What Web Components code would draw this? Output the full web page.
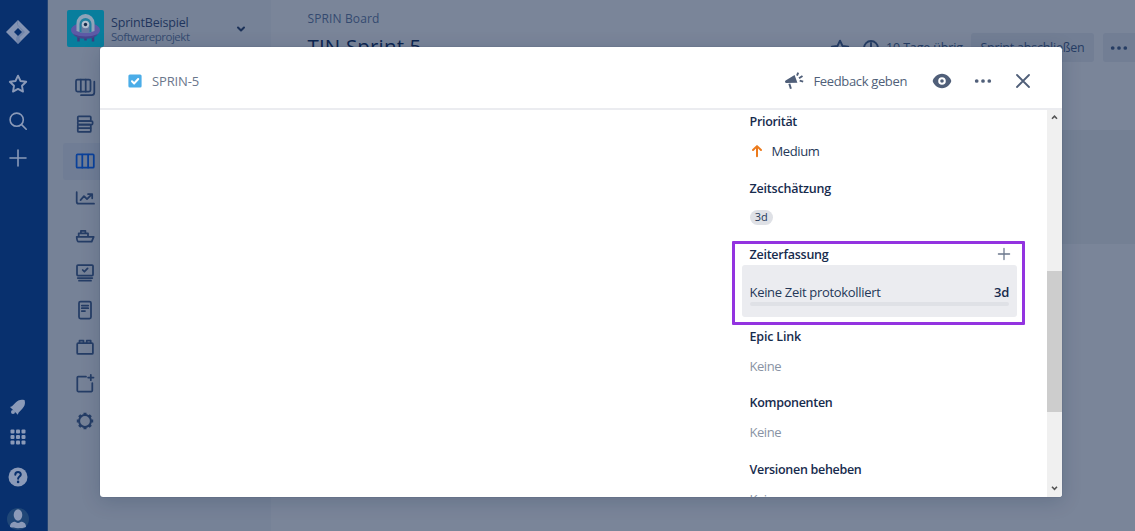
<!DOCTYPE html>
<html lang="de"><head><meta charset="utf-8"><title>SPRIN-5</title>
<style>
html,body{margin:0;height:100%;overflow:hidden}
body{font-family:"Open Sans","Noto Sans",sans-serif;font-size:13px;line-height:20px;color:#253858}
</style></head><body>
<jira-app></jira-app>
<script>
const define=(name,html,setup)=>customElements.define(name,class extends HTMLElement{
  connectedCallback(){
    if(this.shadowRoot)return;
    const t=document.createElement('template');t.innerHTML=html;
    this.attachShadow({mode:'open'}).append(t.content.cloneNode(true));
    if(setup)setup(this,this.shadowRoot);
  }
});

/* One line of text, tracked so that it fills the width given in "w". */
define('fit-text',`<style>:host{display:inline-block;white-space:nowrap}span{display:inline-block}</style><span><slot></slot></span>`,(el,root)=>{
  const s=root.querySelector('span'),w=+el.getAttribute('w'),n=el.textContent.length;
  s.style.letterSpacing=((w-s.getBoundingClientRect().width)/n)+'px';
  el.style.width=w+'px';
});

const icons={
logo:`<path fill="#8594b3" d="M12 0 24 12 12 24 0 12z"/><path fill="#6178a3" d="M12 0c-2 3-1 5 1 7l3 4-4 4c-3 3-2 6 0 9l3-3c-2-2-2-4 0-5l4-4-7-7z" opacity=".55"/><path fill="#08306e" d="m12 8 4 4-4 4-4-4z"/>`,
star:`<path stroke-width="1.900" d="m12 3.700 2.500 5.300 5.700.8-4.200 4 1 5.800L12 16.900l-5 2.700 1-5.800-4.200-4 5.700-.8z"/>`,
search:`<circle cx="10.700" cy="10.700" r="6.600"/><path d="m15.600 15.600 4.600 4.600"/>`,
plus:`<path d="M12 4v16M4 12h16"/>`,
bell:`<path class="f" d="M18.700 5.300c-4-1.300-7 .3-9 2.300L6 11.300l-2 .6 7.800 7.800.7-2 3.800-3.900c2-2 3.300-4.700 2.400-8.500z"/><circle class="f" cx="7" cy="17" r="2"/>`,
grid:`<g class="f"><rect x="4.500" y="4.500" width="4" height="4" rx="1"/><rect x="10" y="4.500" width="4" height="4" rx="1"/><rect x="15.500" y="4.500" width="4" height="4" rx="1"/><rect x="4.500" y="10" width="4" height="4" rx="1"/><rect x="10" y="10" width="4" height="4" rx="1"/><rect x="15.500" y="10" width="4" height="4" rx="1"/><rect x="4.500" y="15.500" width="4" height="4" rx="1"/><rect x="10" y="15.500" width="4" height="4" rx="1"/><rect x="15.500" y="15.500" width="4" height="4" rx="1"/></g>`,
help:`<circle class="f" cx="12" cy="12" r="9.500"/><path d="M9.300 9.700c0-3.600 5.500-3.500 5.500-.2 0 2-2.700 2.100-2.700 4.300" stroke="#08306e" stroke-width="2"/><circle cx="12.100" cy="16.900" r="1.300" fill="#08306e" stroke="none"/>`,
user:`<circle cx="12" cy="12" r="11" fill="#204777" stroke="none"/><ellipse class="f" cx="12" cy="8" rx="4.300" ry="5.700"/><path class="f" d="M4 20c0-4 2.500-5 5-5.200 1.500 1.500 4.500 1.500 6 0 2.500.2 5 1.200 5 5.200-4 1.600-12 1.600-16 0z"/>`,
boards:`<rect x="3" y="4.500" width="14.500" height="12" rx="1.500"/><path d="M7.800 4.500v12M12.700 4.500v12M21.300 6.700v10.800q0 2.700-2.700 2.700H8"/>`,
backlog:`<rect x="4.800" y="4.300" width="13" height="4.800" rx="1"/><rect x="4.800" y="9.100" width="14.800" height="3.500" rx="1"/><rect x="4.800" y="12.600" width="13" height="7.300" rx="1"/><path d="M5 16.200h12.500"/>`,
board:`<rect x="3.600" y="5.400" width="17.200" height="13.300" rx="1"/><path d="M9.300 5.600v13M15.100 5.600v13"/>`,
chart:`<path d="M3.700 6.200v9.500q0 2 2 2H21M7.500 14.100l3.500-4 3 3 5-4.900M15 8h4.200v4.300"/>`,
ship:`<path d="M3.700 13.800h17l-2 4.900H5.500q-1.600 0-1.800-4.900zM5.700 13.500v-3.200h9.300v3.200M7.900 10V7.800h4.500V10"/>`,
screen:`<rect x="4" y="4" width="16" height="10.500" rx="1"/><path d="m9.700 9 1.700 1.700 3.200-3.300M4.800 17h14.500M6 19.700h12"/>`,
page:`<rect x="6" y="3.500" width="12" height="17" rx="1.500"/><path d="M8.800 7.500h6.400M8.800 10.200h6.400M8.800 13h3.200"/>`,
addon:`<rect x="4.200" y="8.200" width="15.700" height="10.700" rx="1"/><path d="M6.500 8V5.700h4V8M13.700 8V5.700h4V8"/>`,
additem:`<path d="M13 4.700H5.200q-.9 0-.9.9v13q0 .9.900.9h13.200q.9 0 .9-.9V11M17.800 2.800v5.400M15.100 5.500h5.400"/>`,
gear:`<circle cx="12" cy="12" r="5.900" stroke-width="2"/><path stroke-width="3" stroke-linecap="butt" d="M12 6.200V3.800M12 20.200v-2.400M6.200 12H3.800M20.200 12h-2.400M7.900 7.900 6.200 6.200M17.800 17.800l-1.700-1.700M7.900 16.100l-1.700 1.700M17.800 6.200l-1.700 1.700"/>`,
chevron:`<path d="m9 10.500 3 3 3-3"/>`,
clock:`<circle cx="12" cy="12" r="7" stroke-width="1.900"/><path stroke-width="1.900" d="M12 7v5.500"/>`,
dots:`<g class="f"><circle cx="5.700" cy="12" r="1.850"/><circle cx="12" cy="12" r="1.850"/><circle cx="18.300" cy="12" r="1.850"/></g>`,
mega:`<path class="f" d="M3.600 11.600 12.600 6l2.800 7.700-11.300.2q-2-.7-.5-2.300z"/><path d="m7.300 14.700 1.600 5" stroke-width="2" stroke-linecap="butt"/><path stroke-linecap="butt" stroke-width="1.900" d="m15 6.600 1.200-3M17 9.300l3.500-2.300M17.700 11.700l3.500.9"/>`,
eye:`<path class="f" d="M12 4.800c-5 0-8.700 4.300-9.300 7.200.6 2.900 4.300 7.200 9.300 7.200s8.700-4.300 9.300-7.200c-.6-2.900-4.300-7.200-9.300-7.200z"/><circle cx="12" cy="12" r="2.800" fill="none" stroke="#fff" stroke-width="2"/>`,
close:`<path d="m6 6 12 12M18 6 6 18"/>`,
up:`<path d="M12 17.200V7.600M8 11l4-3.900 4 3.900"/>`,
task:`<rect x="5.400" y="5.400" width="13.200" height="13.200" rx="1.500" fill="#4bade8" stroke="none"/><path d="m9 12.300 2.200 2.100 4-4.400" stroke="#fff" stroke-width="2.100"/>`
};
define('ui-icon',`<style>:host{display:block;width:24px;height:24px;flex:none}svg{display:block;width:24px;height:24px;fill:none;stroke:currentColor;stroke-width:var(--sw,1.6);stroke-linecap:round;stroke-linejoin:round}.f{fill:currentColor;stroke:none}</style><svg viewBox="0 0 24 24"></svg>`,(el,root)=>{
  const n=el.getAttribute('name'),s=root.querySelector('svg');s.innerHTML=icons[n];if(n==='logo')s.style.stroke='none';
});

define('global-rail',`<style>
:host{display:flex;flex-direction:column;justify-content:space-between;width:48px;height:531px;box-sizing:border-box;background:#08306e;color:#8b9ab8;padding-left:6.400px;box-shadow:inset -1px 0 #234475;overflow:hidden}
div{display:flex;flex-direction:column}
.top{padding-top:20px;gap:13px}.top>:first-child{margin-bottom:14.800px}
.bot{padding-bottom:0;height:136px}.bot>*{margin-bottom:6px}.bot>:nth-child(2){margin-bottom:16.400px}.bot>:nth-child(3){margin-bottom:17.500px}
</style><div class="top"><ui-icon name="logo"></ui-icon><ui-icon name="star"></ui-icon><ui-icon name="search"></ui-icon><ui-icon name="plus"></ui-icon></div>
<div class="bot"><ui-icon name="bell"></ui-icon><ui-icon name="grid"></ui-icon><ui-icon name="help"></ui-icon><ui-icon name="user"></ui-icon></div>`);

define('project-avatar',`<style>:host{display:block;width:37px;height:37px}svg{display:block}</style>
<svg width="37" height="37" viewBox="0 0 37 37"><rect width="37" height="37" rx="2" fill="#087e9d"/><path d="M11.500 26v5.500M18.500 28v2.500M26 26v5.500" stroke="#3f3c80" stroke-width="2.500"/><ellipse cx="18.500" cy="20" rx="14.500" ry="7.500" fill="#5d5aa6"/><path d="M6 24q12.500 5 25 0-3 4.700-12.500 4.700T6 24z" fill="#47458d"/><path d="M9.500 21v-8a9 9 0 0 1 18 0v8q-9 4-18 0z" fill="#8fa3b9"/><path d="M12.500 22v-8a6 6 0 0 1 12 0v8q-6 2-12 0z" fill="#237f9f"/><path d="M14.500 22.500v-9h8v9q-4 1-8 0z" fill="#6979a2"/><circle cx="18.500" cy="14.500" r="3.700" fill="#b3bfce"/><circle cx="18.500" cy="14.500" r="1.700" fill="#172b4d"/></svg>`);

define('nav-item',`<style>:host{display:flex;align-items:center;height:37.100px;padding-left:10px;color:#253d66;border-radius:3px}:host([active]){background:#707d95;color:#0a419a}ui-icon{--sw:1.750}</style><ui-icon></ui-icon>`,(el,root)=>{
  const i=document.createElement('ui-icon');i.setAttribute('name',el.getAttribute('icon'));root.querySelector('ui-icon').replaceWith(i);
});

define('project-sidebar',`<style>
:host{display:block;width:223px;height:531px;background:#768297}
header{display:flex;height:37px;padding:10px 0 0 19px}
.names{width:118px;padding:5px 0 0 7px;display:flex;flex-direction:column}
.names *{line-height:15px;font-size:12.500px;color:#1f355d}.names :last-child{font-size:11.500px;line-height:14px;color:#354b70}
header ui-icon{margin:7px 0 0 -.500px;color:#1b3158;--sw:2}
nav{padding:21.500px 15px 0}
</style><header><project-avatar></project-avatar><div class="names"><fit-text w="77.500">SprintBeispiel</fit-text><fit-text w="78.500">Softwareprojekt</fit-text></div><ui-icon name="chevron"></ui-icon></header>
<nav>${['boards','backlog','board','chart','ship','screen','page','addon','additem','gear'].map((n,i)=>`<nav-item icon="${n}"${i===2?' active':''}></nav-item>`).join('')}</nav>`);

define('board-page',`<style>
:host{display:flex;flex-direction:column;height:531px;background:#7a8599;overflow:hidden;color:#263d64}
.crumb{padding:9px 0 0 36.500px;font-size:12px;height:20px;color:#344a70}
.row{display:flex;height:31px;padding-left:36.500px;margin-top:4px;justify-content:space-between}
h1{margin:-.800px 0 0;font-size:20.500px;font-weight:500;line-height:28px;color:#0d2650}
.tools{display:flex;align-items:center;height:29px}
.tools fit-text{font-size:12.500px;position:relative;top:.600px}
.btn{display:flex;align-items:center;justify-content:center;background:#727e94;height:29px;border-radius:3px}
.b1{width:123px;margin-left:8px}.b2{width:32px;margin-left:9px;border-radius:3px 0 0 3px}
.columns{margin-top:66px;height:114px;background:#748094}
</style><div class="crumb"><fit-text w="72">SPRIN Board</fit-text></div>
<div class="row"><h1><fit-text w="114">TIN Sprint 5</fit-text></h1><div class="tools"><ui-icon name="star" style="margin-top:3px"></ui-icon><ui-icon name="clock" style="margin:0 3px 0 7px"></ui-icon><fit-text w="77">10 Tage übrig</fit-text><div class="btn b1"><fit-text w="104">Sprint abschließen</fit-text></div><div class="btn b2"><ui-icon name="dots" style="margin-top:1px"></ui-icon></div></div></div>
<div class="columns"></div>`);

define('issue-field',`<style>
:host{display:block;height:66.600px;color:#253858}
.label{height:20px;display:flex;justify-content:space-between;font-size:12.500px;font-weight:600;color:#172b4d}
.value{height:20px;margin-top:9px;display:flex;align-items:center}
:host([empty]) .value{color:#8993a4}
</style><div class="label"><slot name="label"></slot><slot name="action"></slot></div><div class="value"><slot></slot></div>`);

define('time-tracking',`<style>
:host{display:block;position:relative;height:81.500px}
.label{height:20px;display:flex;justify-content:space-between;font-size:12.500px;font-weight:600;color:#172b4d}
.label ui-icon{margin:-3px -6.500px 0 0;color:#6b778c;--sw:1.800;transform:scale(.7)}
.card{margin:.200px -8px 0;height:52px;box-sizing:border-box;padding:16.200px 8px 0;background:#ebecf0;border-radius:3px}
.line{display:flex;justify-content:space-between;height:20px}.line b{font-weight:600;color:#172b4d}
.bar{height:4px;margin-top:.300px;background:#dfe1e6;border-radius:2px}
.mark{position:absolute;left:-17.500px;top:-4px;width:287px;height:78px;border:3px solid #9333e0;border-radius:1px}
</style><div class="label"><fit-text w="79">Zeiterfassung</fit-text><ui-icon name="plus"></ui-icon></div>
<div class="card"><div class="line"><fit-text w="131">Keine Zeit protokolliert</fit-text><b><fit-text w="15">3d</fit-text></b></div><div class="bar"></div></div><div class="mark"></div>`);

define('scroll-bar',`<style>
:host{display:flex;flex-direction:column;width:15px;background:#f0f0f0}
svg{display:block;width:15px;height:15px;fill:none;stroke:#555;stroke-width:1.600}
i{display:block;margin:146px 0 auto;height:141px;background:#cdcdcd}
</style><svg viewBox="0 0 15 15"><path d="m5 8.700 2.500-2.500L10 8.700"/></svg><i></i><svg viewBox="0 0 15 15"><path d="m5 4.800 2.500 2.500L10 4.800"/></svg>`);

define('issue-dialog',`<style>
:host{display:flex;flex-direction:column;width:962px;height:450px;background:#fff;border-radius:3px;overflow:hidden;box-shadow:0 0 1px #091e4280,0 4px 20px #091e4230}
header{display:flex;align-items:center;height:61px;padding-top:6px;box-sizing:border-box;padding-left:23.400px;color:#505f79}
header .key{margin-left:4.600px;color:#6b778c;margin-right:auto}
.rule{height:2px;background:#ebecf0;flex:none}
.body{display:flex;flex:1;min-height:0;overflow:hidden;justify-content:flex-end}
.fields{width:259.500px;margin-right:38px;padding-top:2px}
.pill{display:inline-flex;height:15px;align-items:center;justify-content:center;width:23.500px;border-radius:8px;background:#dfe1e6;font-size:11px;position:relative;top:-.500px}
.up{color:#ec7a1c;--sw:2;margin:-1px 3px 0 -5px}
</style><header><ui-icon name="task"></ui-icon><fit-text class="key" w="47">SPRIN-5</fit-text>
<ui-icon name="mega" style="margin-right:7.500px"></ui-icon><fit-text w="93.500">Feedback geben</fit-text><ui-icon name="eye" style="margin-left:22.500px"></ui-icon><ui-icon name="dots" style="margin-left:17px"></ui-icon><ui-icon name="close" style="margin:0 26.700px 0 16.800px;--sw:1.8"></ui-icon></header><div class="rule"></div>
<div class="body"><div class="fields">
<issue-field><fit-text slot="label" w="47.500">Priorität</fit-text><ui-icon class="up" name="up"></ui-icon><fit-text w="48">Medium</fit-text></issue-field>
<issue-field><fit-text slot="label" w="81.500">Zeitschätzung</fit-text><span class="pill">3d</span></issue-field>
<time-tracking></time-tracking>
<issue-field empty><fit-text slot="label" w="51.500">Epic Link</fit-text><fit-text w="31.500">Keine</fit-text></issue-field>
<issue-field empty><fit-text slot="label" w="83">Komponenten</fit-text><fit-text w="31.500">Keine</fit-text></issue-field>
<issue-field empty><fit-text slot="label" w="112">Versionen beheben</fit-text><fit-text w="31.500">Keine</fit-text></issue-field>
</div><scroll-bar></scroll-bar></div>`);

define('jira-app',`<style>
:host{display:grid;grid-template-columns:48px 223px 1fr;position:relative;width:1135px;height:531px;overflow:hidden}
issue-dialog{position:absolute;left:100px;top:47px}
</style><global-rail></global-rail><project-sidebar></project-sidebar><board-page></board-page><issue-dialog></issue-dialog>`);
</script></body></html>
